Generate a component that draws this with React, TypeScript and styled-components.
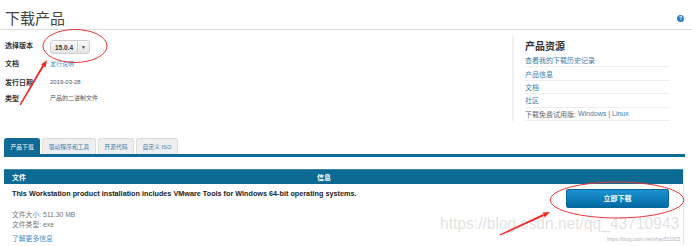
import React from "react";
import styled, { createGlobalStyle } from "styled-components";

const GlobalStyle = createGlobalStyle`
  html, body {
    margin: 0;
    padding: 0;
    background: #fff;
  }
  body {
    font-family: "Liberation Sans", "Noto Sans CJK SC", sans-serif;
    color: #333;
  }
`;

const infoRows = [
  { label: "文档", value: "发行说明", link: true, height: 18 },
  { label: "发行日期", value: "2019-03-28", link: false, height: 19 },
  { label: "类型", value: "产品的二进制文件", link: false, height: 13 },
];

const resources = ["查看我的下载历史记录", "产品信息", "文档", "社区"];

const tabs = ["产品下载", "驱动程序和工具", "开源代码", "自定义 ISO"];

export default function App() {
  return (
    <>
      <GlobalStyle />
      <Page>
        <TitleBar>
          <Title>下载产品</Title>
          <HelpIcon>?</HelpIcon>
        </TitleBar>

        <TopSection>
          <InfoGrid>
            <InfoRow $height={18}>
              <Label>选择版本</Label>
              <Select>
                <SelectValue>15.0.4</SelectValue>
                <SelectCaret>▼</SelectCaret>
              </Select>
            </InfoRow>
            {infoRows.map((row) => (
              <InfoRow key={row.label} $height={row.height}>
                <Label>{row.label}</Label>
                <Value $link={row.link}>{row.value}</Value>
              </InfoRow>
            ))}
          </InfoGrid>

          <Sidebar>
            <SidebarTitle>产品资源</SidebarTitle>
            {resources.map((r) => (
              <SidebarRow key={r}>
                <SideLink>{r}</SideLink>
              </SidebarRow>
            ))}
            <SidebarRow>
              <SideText>下载免费试用版: </SideText>
              <SideLink>Windows</SideLink>
              <SideText> | </SideText>
              <SideLink>Linux</SideLink>
            </SidebarRow>
          </Sidebar>
        </TopSection>

        <TabBar>
          {tabs.map((t, i) => (
            <Tab key={t} $active={i === 0}>
              {t}
            </Tab>
          ))}
        </TabBar>

        <Table>
          <TableHead>
            <HeadCell>文件</HeadCell>
            <HeadCell>信息</HeadCell>
          </TableHead>
          <TableRow>
            <FileInfo>
              <Description>
                This Workstation product installation includes VMware Tools for
                Windows 64-bit operating systems.
              </Description>
              <Meta>文件大小: 511.30 MB</Meta>
              <Meta>文件类型: exe</Meta>
              <MoreLink>了解更多信息</MoreLink>
            </FileInfo>
            <DownloadButton>立即下载</DownloadButton>
          </TableRow>
        </Table>

        <Watermark>https://blog.csdn.net/qq_43710943</Watermark>
        <SmallMark>https://blog.csdn.net/shao511925</SmallMark>

        <Annotations width="692" height="246" viewBox="0 0 692 246">
          <ellipse cx="75" cy="46" rx="32" ry="16.5" fill="none" stroke="#e8373a" strokeWidth="1" />
          <polygon points="19.5,104.5 20.8,105.2 44.2,65.9 42.4,64.9" fill="#ee2b2b" />
          <polygon points="47,60 45.6,67.4 41.1,64.6" fill="#ee2b2b" />
          <ellipse cx="617" cy="200" rx="67" ry="18" fill="none" stroke="#e8373a" strokeWidth="1" />
          <polygon points="499.6,234.4 500.4,235.6 543.9,216.1 543.1,214" fill="#ee2b2b" />
          <polygon points="550,212 544.8,217.4 542.5,212.4" fill="#ee2b2b" />
        </Annotations>
      </Page>
    </>
  );
}

const Page = styled.div`
  position: relative;
  width: 692px;
  height: 246px;
  overflow: hidden;
`;

const TitleBar = styled.div`
  box-sizing: border-box;
  height: 30px;
  padding: 10px 8px 0 5px;
  display: flex;
  justify-content: space-between;
  align-items: flex-start;
  border-bottom: 1px solid #dedede;
`;

const Title = styled.h1`
  margin: 0;
  font-size: 15px;
  line-height: 17px;
  font-weight: 400;
  color: #444;
`;

const HelpIcon = styled.span`
  margin-top: 5px;
  width: 7px;
  height: 7px;
  border-radius: 50%;
  background: #2a7fc0;
  color: #fff;
  font-size: 5px;
  font-weight: 700;
  line-height: 7px;
  text-align: center;
`;

const TopSection = styled.div`
  display: flex;
  align-items: flex-start;
  padding-top: 6px;
`;

const InfoGrid = styled.div`
  padding-left: 5px;
  display: flex;
  flex-direction: column;
`;

const InfoRow = styled.div<{ $height: number }>`
  height: ${(p) => p.$height}px;
  display: flex;
  align-items: center;
`;

const Label = styled.span`
  width: 45px;
  font-size: 7px;
  font-weight: 700;
  color: #333;
`;

const Value = styled.span<{ $link?: boolean }>`
  font-size: 6px;
  color: ${(p) => (p.$link ? "#4b9bd4" : "#555")};
`;

const Select = styled.div`
  box-sizing: border-box;
  margin-top: 4px;
  width: 40px;
  height: 14px;
  display: flex;
  align-items: stretch;
  border: 1px solid #cfcfcf;
  border-radius: 3px;
  background: linear-gradient(#fafafa, #e4e4e4);
`;

const SelectValue = styled.span`
  flex: 1;
  font-size: 6.5px;
  font-weight: 700;
  color: #333;
  display: flex;
  align-items: center;
  justify-content: center;
`;

const SelectCaret = styled.span`
  width: 11px;
  border-left: 1px solid #cfcfcf;
  font-size: 5px;
  color: #444;
  display: flex;
  align-items: center;
  justify-content: center;
`;

const Sidebar = styled.div`
  margin-left: auto;
  margin-right: 22px;
  width: 145px;
  padding-left: 11px;
  border-left: 2px solid #f0f0f0;
`;

const SidebarTitle = styled.div`
  height: 17px;
  display: flex;
  align-items: center;
  padding-top: 1px;
  box-sizing: border-box;
  font-size: 10px;
  font-weight: 700;
  color: #333;
  margin-bottom: 1px;
`;

const SidebarRow = styled.div`
  box-sizing: border-box;
  height: 13.4px;
  display: flex;
  align-items: center;
  border-bottom: 1px solid #eeeeee;
  font-size: 7px;
  white-space: pre;
`;

const SideLink = styled.span`
  color: #3b7daa;
`;

const SideText = styled.span`
  color: #666;
`;

const TabBar = styled.div`
  margin: 17px 7px 0 4px;
  display: flex;
  gap: 2px;
  border-bottom: 3px solid #0f6b95;
`;

const Tab = styled.div<{ $active?: boolean }>`
  box-sizing: border-box;
  height: 16px;
  padding: 0 5.5px;
  display: flex;
  align-items: center;
  font-size: 5.8px;
  border-radius: 3px 3px 0 0;
  color: ${(p) => (p.$active ? "#fff" : "#3d7fb0")};
  background: ${(p) => (p.$active ? "#0f6b95" : "#efefef")};
  border: 1px solid ${(p) => (p.$active ? "#0f6b95" : "#dcdcdc")};
  border-bottom: none;
`;

const Table = styled.div`
  margin: 12px 8px 0 4px;
  border-right: 1px solid #e6e6e6;
`;

const TableHead = styled.div`
  height: 15px;
  display: grid;
  grid-template-columns: 305px 1fr;
  align-items: center;
  background: #0d6a93;
  border-top: 1px solid #3f87aa;
  box-sizing: border-box;
`;

const HeadCell = styled.div`
  padding-left: 8px;
  font-size: 7px;
  font-weight: 700;
  color: #fff;
`;

const TableRow = styled.div`
  display: flex;
  justify-content: space-between;
  align-items: flex-start;
  padding: 5px 14px 0 8px;
`;

const FileInfo = styled.div`
  display: flex;
  flex-direction: column;
`;

const Description = styled.div`
  font-size: 7.25px;
  line-height: 10px;
  font-weight: 700;
  color: #222;
  margin-bottom: 11px;
`;

const Meta = styled.div`
  font-size: 6.8px;
  line-height: 10px;
  color: #777;
`;

const MoreLink = styled.div`
  margin-top: 4px;
  font-size: 6.8px;
  line-height: 10px;
  color: #3d8fd0;
`;

const DownloadButton = styled.button`
  margin-top: 0;
  width: 103px;
  height: 19px;
  border: 1px solid #0a6598;
  border-radius: 2px;
  background: linear-gradient(#1e92d2, #036aa3);
  color: #fff;
  font-family: inherit;
  font-size: 7px;
  font-weight: 700;
  padding: 0;
`;

const Watermark = styled.div`
  position: absolute;
  left: 440px;
  top: 214px;
  font-size: 15.6px;
  line-height: 20px;
  color: rgba(160, 160, 160, 0.32);
  white-space: nowrap;
  pointer-events: none;
`;

const SmallMark = styled.div`
  position: absolute;
  left: 607px;
  top: 236px;
  font-size: 5px;
  color: #b5b5b5;
  white-space: nowrap;
  pointer-events: none;
`;

const Annotations = styled.svg`
  position: absolute;
  left: 0;
  top: 0;
  pointer-events: none;
`;
